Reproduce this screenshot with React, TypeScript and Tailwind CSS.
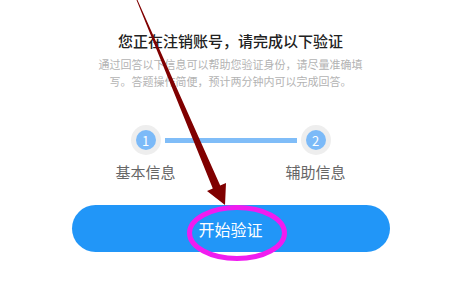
import React from 'react';

const StepDot = ({ n, label }: { n: number; label: string }) => (
  <div className="flex flex-col items-center w-[30px]">
    <div className="w-[30px] h-[30px] rounded-full bg-[#eeeeee] flex items-center justify-center">
      <div className="w-[20px] h-[20px] rounded-full bg-[#7cbaf8] flex items-center justify-center text-white text-[13px] leading-none">
        {n}
      </div>
    </div>
    <span className="mt-[7px] whitespace-nowrap text-[15px] leading-[20px] text-[#666666]">{label}</span>
  </div>
);

export default function App() {
  return (
    <div
      className="relative w-[450px] h-[300px] bg-white overflow-hidden"
      style={{ fontFamily: '"Noto Sans CJK SC", "Noto Sans", sans-serif' }}
    >
      <div className="ml-[11px] flex flex-col items-center pt-[30px]">
        <h1 className="text-[15px] leading-[22px] font-medium text-[#222222]">您正在注销账号，请完成以下验证</h1>
        <p className="mt-[4px] w-[270px] text-center text-[11px] leading-[17px] text-[#b3b3b3]">
          通过回答以下信息可以帮助您验证身份，请尽量准确填写。答题操作简便，预计两分钟内可以完成回答。
        </p>

        {/* steps */}
        <div className="mt-[35px] flex items-start">
          <StepDot n={1} label="基本信息" />
          <div className="mx-[4px] mt-[12.5px] w-[132px] h-[5px] bg-[#80bdf8]" />
          <StepDot n={2} label="辅助信息" />
        </div>

        <button className="mt-[23px] w-[318px] h-[47px] rounded-full bg-[#2196f8] text-white text-[16px]">
          开始验证
        </button>
      </div>

      {/* annotation overlay */}
      <svg className="absolute inset-0 pointer-events-none" width="450" height="300" viewBox="0 0 450 300">
        <ellipse cx="237" cy="233" rx="47.5" ry="25.5" fill="none" stroke="#f01cf0" strokeWidth="5" />
        <polygon
          points="136.5,0 137.5,0 220.2,185.4 226,183 225,205 207,191 212.8,188.6"
          fill="#800000"
        />
      </svg>
    </div>
  );
}
